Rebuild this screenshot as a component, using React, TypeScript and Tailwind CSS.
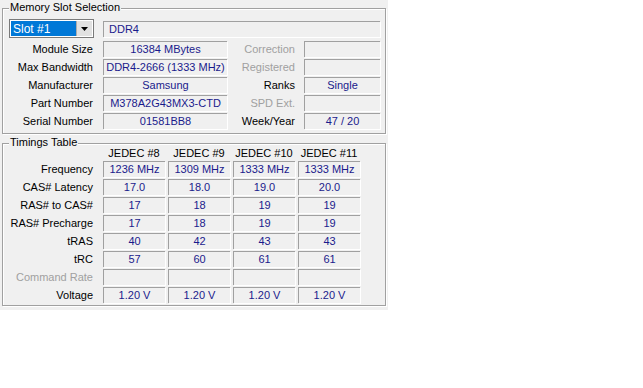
import React from 'react';

const font = { fontFamily: '"Liberation Sans", Arial, sans-serif' };

const Field = ({ w, children, left }: { w: string; children?: React.ReactNode; left?: boolean }) => (
  <div
    className={`${w} h-[16px] border-t border-l border-[#a0a0a0] shadow-[1px_1px_0_#ffffff] flex items-center ${left ? 'pl-[5px]' : 'justify-center'} text-[#1a1a8c] whitespace-nowrap overflow-hidden leading-none`}
  >
    {children}
  </div>
);

const Label = ({ w, children, dim }: { w: string; children: React.ReactNode; dim?: boolean }) => (
  <div className={`${w} text-right whitespace-nowrap leading-none ${dim ? 'text-[#a0a0a0]' : 'text-black'}`}>{children}</div>
);

const Group = ({ title, h, children }: { title: string; h: string; children: React.ReactNode }) => (
  <div className={`relative ml-[2px] w-[384px] ${h} border border-[#a0a0a0] shadow-[1px_1px_0_#ffffff,inset_1px_1px_0_#ffffff]`}>
    <span className="absolute left-[6px] -top-[7px] px-[1px] bg-[#f0f0f0] text-black leading-none text-[11px]">{title}</span>
    {children}
  </div>
);

const slotRows: [string, string, string, string, boolean][] = [
  ['Module Size', '16384 MBytes', 'Correction', '', true],
  ['Max Bandwidth', 'DDR4-2666 (1333 MHz)', 'Registered', '', true],
  ['Manufacturer', 'Samsung', 'Ranks', 'Single', false],
  ['Part Number', 'M378A2G43MX3-CTD', 'SPD Ext.', '', true],
  ['Serial Number', '01581BB8', 'Week/Year', '47 / 20', false],
];

const timingRows: [string, string[], boolean?][] = [
  ['Frequency', ['1236 MHz', '1309 MHz', '1333 MHz', '1333 MHz']],
  ['CAS# Latency', ['17.0', '18.0', '19.0', '20.0']],
  ['RAS# to CAS#', ['17', '18', '19', '19']],
  ['RAS# Precharge', ['17', '18', '19', '19']],
  ['tRAS', ['40', '42', '43', '43']],
  ['tRC', ['57', '60', '61', '61']],
  ['Command Rate', ['', '', '', ''], true],
  ['Voltage', ['1.20 V', '1.20 V', '1.20 V', '1.20 V']],
];

export default function App() {
  return (
    <div className="w-[643px] h-[388px] bg-white text-[11px]" style={font}>
      <div className="w-[388px] h-[310px] bg-[#f0f0f0] pt-[8px]">
        <Group title="Memory Slot Selection" h="h-[126px]">
          <div className="flex flex-col pt-[10px] gap-[2px]">
            <div className="flex items-center h-[19px] mb-[1px]">
              <div className="ml-[6px] w-[85px] h-[19px] border border-[#7a7a7a] bg-white flex p-[1px]">
                <div className="flex-1 bg-[#0078d7] text-white flex items-center pl-[2px] leading-none text-[12px]">Slot #1</div>
                <div className="w-[16px] bg-[#e1e1e1] border-l border-[#adadad] flex items-center justify-center">
                  <svg width="7" height="4" viewBox="0 0 7 4"><path d="M0 0h7L3.5 4z" fill="#000" /></svg>
                </div>
              </div>
              <div className="ml-[9px]">
                <Field w="w-[277px]" left>DDR4</Field>
              </div>
            </div>
            {slotRows.map(([l, v, r, rv, dim]) => (
              <div key={l} className="flex items-center h-[16px]">
                <Label w="w-[90px]">{l}</Label>
                <div className="ml-[10px]">
                  <Field w="w-[124px]">{v}</Field>
                </div>
                <Label w="w-[68px]" dim={dim}>{r}</Label>
                <div className="ml-[9px]">
                  <Field w="w-[76px]">{rv}</Field>
                </div>
              </div>
            ))}
          </div>
        </Group>
        <div className="mt-[9px]">
          <Group title="Timings Table" h="h-[163px]">
            <div className="flex flex-col pt-[2px]">
              <div className="flex h-[14px] items-center">
                <div className="w-[100px]" />
                <div className="flex gap-[3px]">
                  {['JEDEC #8', 'JEDEC #9', 'JEDEC #10', 'JEDEC #11'].map((h) => (
                    <div key={h} className="w-[62px] text-center leading-none text-black whitespace-nowrap">{h}</div>
                  ))}
                </div>
              </div>
              <div className="flex flex-col gap-[2px] mt-[1px]">
                {timingRows.map(([l, vals, dim]) => (
                  <div key={l} className="flex items-center h-[16px]">
                    <Label w="w-[90px]" dim={dim}>{l}</Label>
                    <div className="ml-[10px] flex gap-[3px]">
                      {vals.map((v, i) => (
                        <Field key={i} w="w-[62px]">{v}</Field>
                      ))}
                    </div>
                  </div>
                ))}
              </div>
            </div>
          </Group>
        </div>
      </div>
    </div>
  );
}
